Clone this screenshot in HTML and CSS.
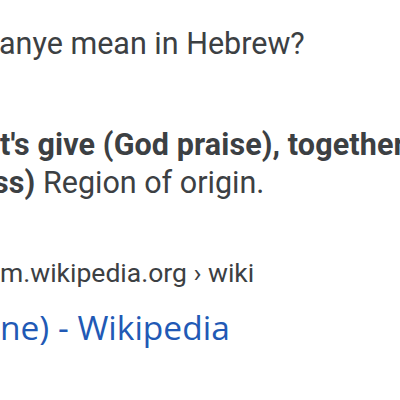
FILE: index.html
```html
<!DOCTYPE html>
<html lang="en">
<head>
    <meta charset="UTF-8">
    <meta name="viewport" content="width=device-width, initial-scale=1.0">
    <title>Kanye in Hebrew</title>
    <link rel="stylesheet" href="styles.css">
</head>
<body>
    <div class="result">
        <div class="question">anye mean in Hebrew?</div>

        <div class="snippet">
            <p class="line"><b>t's give (God praise), together</b></p>
            <p class="line line-shift"><b>ss)</b> Region of origin.</p>
        </div>

        <div class="source">
            <div class="cite">m.wikipedia.org › wiki</div>
            <a class="title" href="#">ne) - Wikipedia</a>
        </div>
    </div>
</body>
</html>
```

FILE: styles.css
```css
* {
    margin: 0;
    padding: 0;
    box-sizing: border-box;
}

body {
    font-family: Roboto, 'Liberation Sans', sans-serif;
    background: #ffffff;
    color: #3c4043;
    overflow: hidden;
}

.result {
    width: 400px;
    height: 400px;
    overflow: hidden;
    padding-top: 26px;
}

.question {
    font-size: 30.5px;
    line-height: 36px;
    white-space: nowrap;
    margin-left: -1px;
}

.snippet {
    margin-top: 64px;
    font-size: 30.5px;
    line-height: 38px;
    white-space: nowrap;
}

.snippet b {
    font-weight: 700;
    letter-spacing: 0.1px;
    color: #3c4043;
}

.line-shift {
    margin-left: -7px;
}

.source {
    margin-top: 54px;
}

.cite {
    font-size: 26.5px;
    line-height: 34px;
    white-space: nowrap;
    color: #3c4043;
}

.title {
    display: block;
    margin-top: 16px;
    font-family: 'Open Sans', Roboto, sans-serif;
    font-size: 33.5px;
    line-height: 42px;
    color: #2159b5;
    text-decoration: none;
    white-space: nowrap;
}
```
